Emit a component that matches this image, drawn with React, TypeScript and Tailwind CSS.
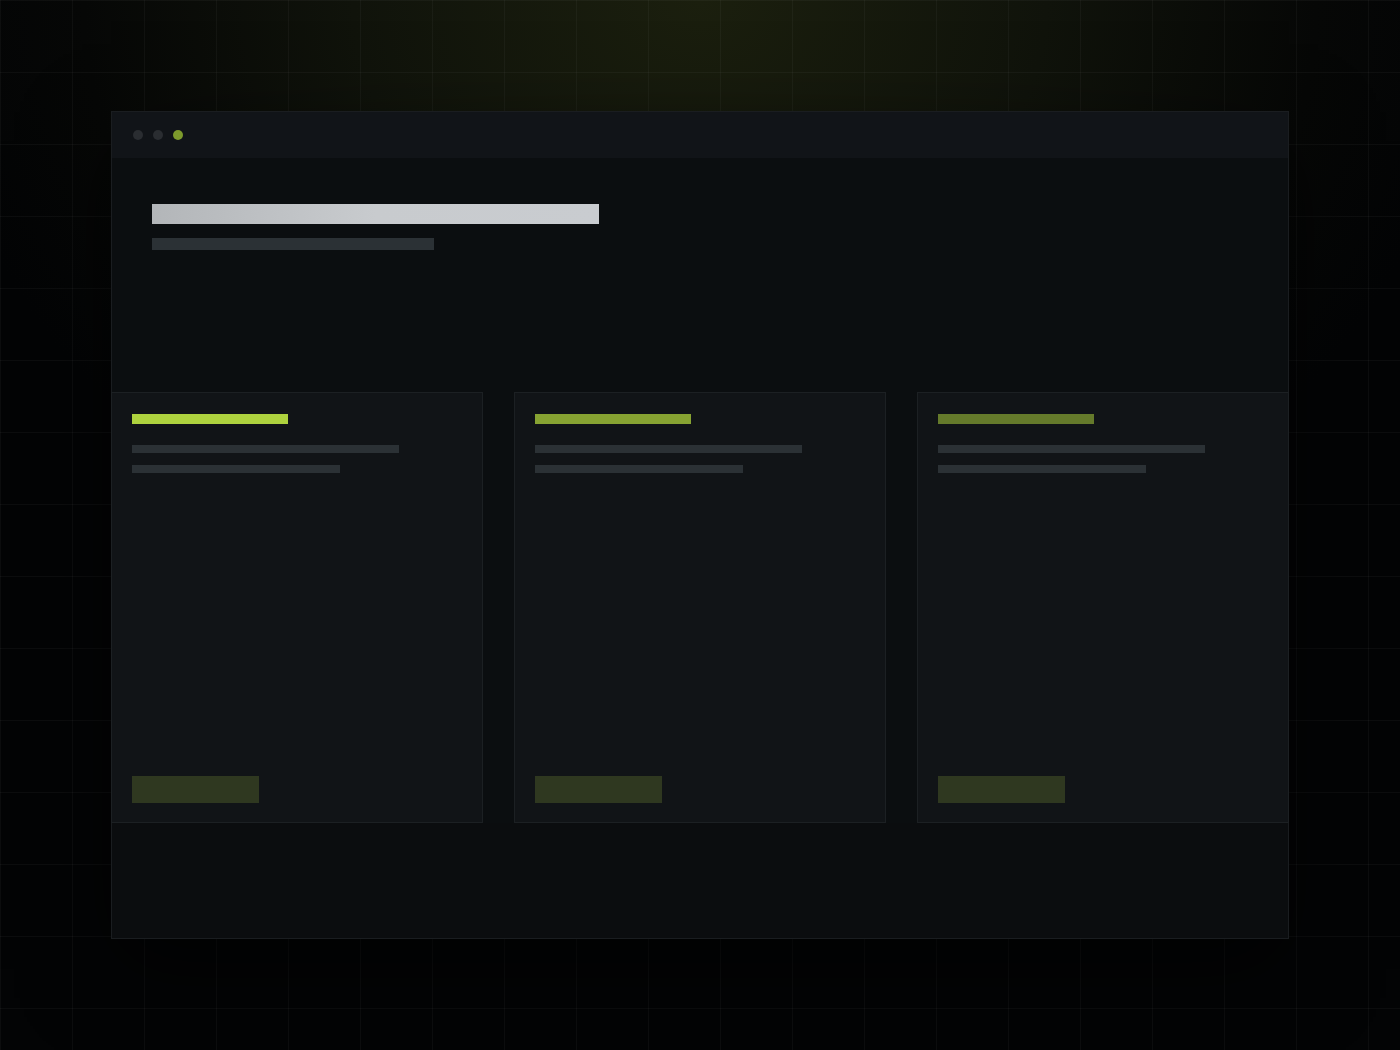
import React from "react";

const cards = [
  { accent: "bg-[#aed23e]" },
  { accent: "bg-[#87a332]" },
  { accent: "bg-[#657a2b]" },
];

function SkeletonCard({ accent }: { accent: string }) {
  return (
    <div className="flex flex-col border border-[#1c2023] bg-[#111417] px-[20px] pt-[21px] pb-[19px]">
      <div className={`h-[10px] w-[156px] ${accent}`} />
      <div className="mt-[21px] h-[8px] w-[267px] bg-[#2b3135]" />
      <div className="mt-[12px] h-[8px] w-[208px] bg-[#2b3135]" />
      <div className="mt-auto h-[27px] w-[127px] bg-[#2f3820]" />
    </div>
  );
}

export default function App() {
  return (
    <div className="relative h-[1050px] w-[1400px] overflow-hidden bg-[#030405] font-['Inter',sans-serif]">
      <div className="absolute inset-0 bg-[radial-gradient(ellipse_55%_60%_at_50%_0%,#1b1f0e_0%,#10130b_45%,#060706_80%,#030405_100%)]" />
      <div className="absolute inset-0 bg-[linear-gradient(to_right,rgba(255,255,255,0.035)_1px,transparent_1px),linear-gradient(to_bottom,rgba(255,255,255,0.035)_1px,transparent_1px)] bg-[size:72px_72px]" />

      <div className="relative pt-[111px] pl-[111px]">
        <div className="flex h-[828px] w-[1178px] flex-col border border-[#1a1d20] bg-[#0b0e10] shadow-[0_30px_80px_rgba(0,0,0,0.6)]">
          <div className="flex h-[46px] items-center gap-[10px] bg-[#111418] pl-[21px]">
            <span className="h-[10px] w-[10px] rounded-full bg-[#2a2d31]" />
            <span className="h-[10px] w-[10px] rounded-full bg-[#2a2d31]" />
            <span className="h-[10px] w-[10px] rounded-full bg-[#7d9a2c]" />
          </div>

          <div className="px-[40px] pt-[46px]">
            <div className="h-[20px] w-[447px] bg-gradient-to-r from-[#b3b6b9] via-[#c8cbce] to-[#c9ccd0]" />
            <div className="mt-[14px] h-[12px] w-[282px] bg-[#2b3135]" />
          </div>

          <div className="-mx-px mt-[142px] grid h-[431px] grid-cols-3 gap-[31px]">
            {cards.map((card, index) => (
              <SkeletonCard key={index} accent={card.accent} />
            ))}
          </div>

          <div className="flex-1 bg-[#0b0d0f]" />
        </div>
      </div>
    </div>
  );
}
